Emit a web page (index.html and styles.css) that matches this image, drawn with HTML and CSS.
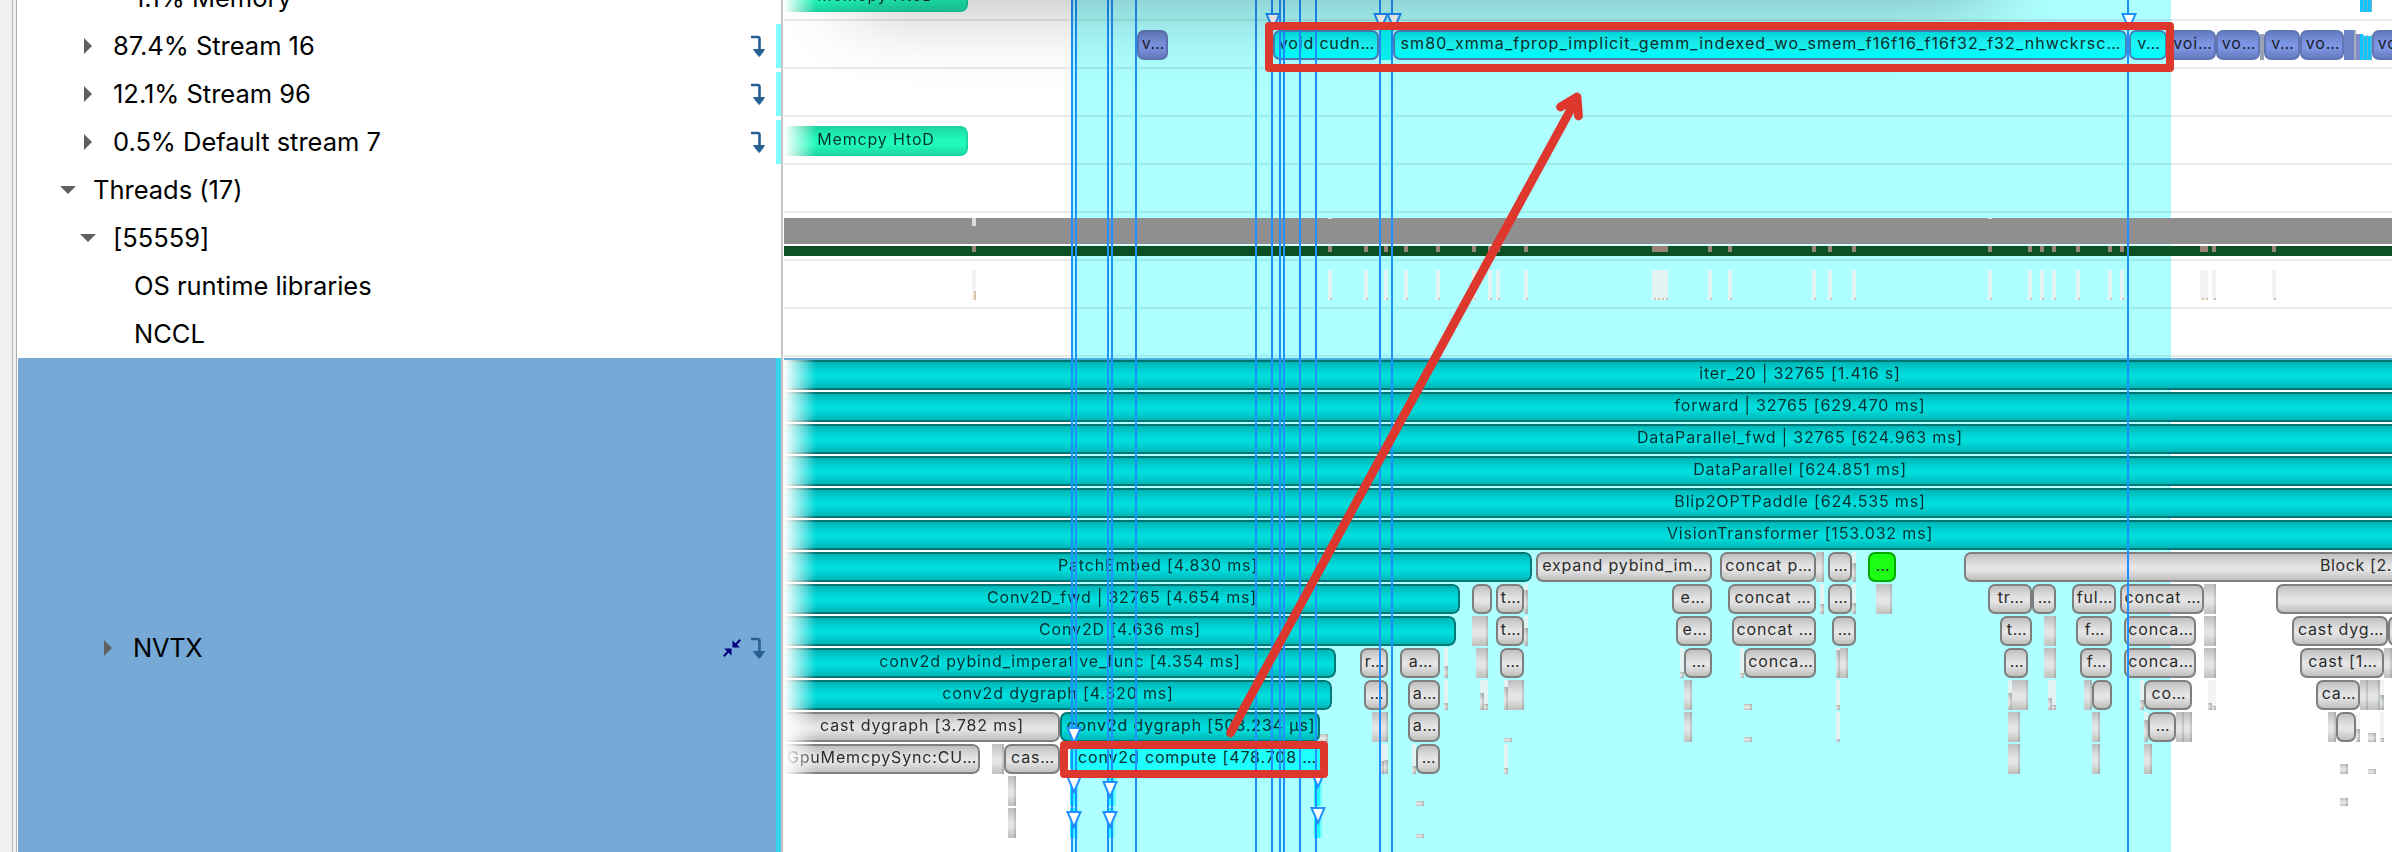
FILE: index.html
```html
<!DOCTYPE html>
<html lang="en">
<head>
<meta charset="utf-8">
<title>Timeline</title>
<link rel="stylesheet" href="styles.css">
</head>
<body>
<div class="app">
  <div class="gutter"></div>
  <aside class="tree">
    <div class="node depth-3"><span class="label">1.1% Memory</span></div>
    <div class="node depth-2 linked"><svg class="caret" viewBox="0 0 16 16"><path d="M4 0L12 8L4 16Z"/></svg><span class="label">87.4% Stream 16</span><svg class="jump" viewBox="0 0 14 24"><path class="hook" d="M0 3H6.5Q8.500 3 8.500 5V16"/><path class="head" d="M2.500 15.500H13.500L10 20.500L8.200 22.500L6.400 20.500Z"/></svg></div>
    <div class="node depth-2 linked"><svg class="caret" viewBox="0 0 16 16"><path d="M4 0L12 8L4 16Z"/></svg><span class="label">12.1% Stream 96</span><svg class="jump" viewBox="0 0 14 24"><path class="hook" d="M0 3H6.5Q8.500 3 8.500 5V16"/><path class="head" d="M2.500 15.500H13.500L10 20.500L8.200 22.500L6.400 20.500Z"/></svg></div>
    <div class="node depth-2 linked"><svg class="caret" viewBox="0 0 16 16"><path d="M4 0L12 8L4 16Z"/></svg><span class="label">0.5% Default stream 7</span><svg class="jump" viewBox="0 0 14 24"><path class="hook" d="M0 3H6.5Q8.500 3 8.500 5V16"/><path class="head" d="M2.500 15.500H13.500L10 20.500L8.200 22.500L6.400 20.500Z"/></svg></div>
    <div class="node depth-1"><svg class="caret" viewBox="0 0 16 16"><path d="M0 4H16L8 12Z"/></svg><span class="label">Threads (17)</span></div>
    <div class="node depth-2"><svg class="caret" viewBox="0 0 16 16"><path d="M0 4H16L8 12Z"/></svg><span class="label">[55559]</span></div>
    <div class="node depth-3"><span class="label">OS runtime libraries</span></div>
    <div class="node depth-3"><span class="label">NCCL</span></div>
    <div class="node depth-3 selected"><svg class="caret" viewBox="0 0 16 16"><path d="M4 0L12 8L4 16Z"/></svg><span class="label">NVTX</span><svg class="collapse" viewBox="0 0 18 18"><path d="M9.500 1.500V8.500H17L14 5.800L18 1.500L16.500 0L12.500 4.200Z"/><path d="M8.500 16.500V9.500H1L4 12.200L0 16.500L1.500 18L5.500 13.800Z"/></svg><svg class="jump" viewBox="0 0 14 24"><path class="hook" d="M0 3H6.5Q8.500 3 8.500 5V16"/><path class="head" d="M2.500 15.500H13.500L10 20.500L8.200 22.500L6.400 20.500Z"/></svg></div>
  </aside>
  <main class="timeline">
    <div class="range"></div>
    <div class="tracks" id="tracks"></div>
    <div class="lanes" id="lanes"></div>
    <div class="markers" id="markers"></div>
  </main>
  <div class="popup-shadow"></div>
  <div class="callout callout-kernels"></div>
  <div class="callout callout-compute"></div>
  <svg class="arrow" viewBox="0 0 380 660"><path d="M20.500 643L367 8M350.500 17L367 7L368.500 26"/></svg>
</div>
<script src="timeline.js"></script>
</body>
</html>
```
FILE: styles.css
```css
* { box-sizing: border-box; }
html, body { margin: 0; height: 100%; overflow: hidden; }
body { background: #fff; font-family: Inter, "Liberation Sans", sans-serif; color: #000; }

.app { position: relative; display: flex; width: 2392px; height: 852px; overflow: hidden; }

.gutter {
  flex: none;
  width: 18px;
  background: linear-gradient(90deg, #f1f1f1 0 12px, #b8b8b8 12px 13px, #f0f0f0 13px 16px, #b0b0b0 16px 17px, #fff 17px);
}

.tree { flex: none; width: 766px; margin-top: -26px; display: flex; flex-direction: column; border-right: 1px solid transparent; background: linear-gradient(90deg, transparent 763px, #c6c6c6 763px 765px, transparent 765px); }
.node { flex: none; display: flex; align-items: center; height: 48px; padding-right: 19px; }
.depth-1 { padding-left: 42px; }
.depth-2 { padding-left: 62px; }
.depth-3 { padding-left: 116px; }
.caret { flex: none; width: 16px; height: 16px; margin-right: 17px; fill: #606060; }
.label { font-size: 25.5px; letter-spacing: -0.02px; line-height: 30px; white-space: nowrap; }
.linked { background: linear-gradient(90deg, transparent 758px, #80ffff 758px 763px, transparent 763px) 0 2px / 100% 44px no-repeat; }
.jump { flex: none; width: 14px; height: 24px; margin-left: auto; margin-right: -1px; }
.hook { fill: none; stroke: #265f91; stroke-width: 2.6; }
.head { fill: #265f91; stroke: #265f91; stroke-width: 1; stroke-linejoin: round; }
.selected { height: 580px; padding-left: 82px; background: linear-gradient(90deg, #76a9d5 758px, #38d4ee 758px 763px, transparent 763px); }
.selected .label { letter-spacing: -0.3px; }
.collapse { flex: none; width: 18px; height: 18px; margin-left: auto; fill: #000080; }
.selected .jump { margin-left: 10px; }

.timeline { position: relative; flex: 1; overflow: hidden; }
.range { position: absolute; left: 288px; top: 0; width: 1099px; height: 852px; background: #aeffff; }

.tracks { position: relative; margin-top: -27px; }
.track { position: relative; height: 48px; border-bottom: 2px solid rgba(0, 0, 0, 0.08); }
.lanes { position: relative; margin-top: 1px; border-top: 2px solid rgba(0, 120, 190, 0.58); display: flex; flex-direction: column; gap: 2px; }
.lane { position: relative; flex: none; height: 30px; }

/* Events sit on the time axis, so each one carries its own start and length. */
.event {
  position: absolute;
  top: 0;
  height: 30px;
  display: flex;
  align-items: center;
  justify-content: center;
  padding-bottom: 4px;
  padding-left: 2px;
  border: 2px solid #7e7e7e;
  border-radius: 7px;
  background: linear-gradient(#bfbfbf, #e4e4e4 45%, #e4e4e4 62%, #bfbfbf);
  color: #2b2b2b;
  font-size: 16px;
  letter-spacing: 0.84px;
  line-height: 20px;
  white-space: nowrap;
  overflow: hidden;
}
.track .event { top: 9px; }
.teal { border-color: #007676; background: linear-gradient(#00b6b6, #00dcdc 45%, #00dcdc 62%, #00b6b6); color: #06302f; }
.cyan { border-color: #4a80b8; background: linear-gradient(#00e6e6, #20f5f5 45%, #00ffff 90%); color: #06302f; }
.wide { letter-spacing: 1.06px; }
.compute { border-color: #00e8e8; background: #20ffff; color: #06302f; }
.green { border-color: #00a800; background: #1aff14; }
.blue { border-color: #6076b4; background: linear-gradient(#657cc0, #7d95e4 45%, #7d95e4 62%, #657cc0); color: #1a1e2c; }
.mint { border-color: #1bd6a2; border-top-width: 0; border-bottom-width: 0; background: linear-gradient(#1cd2a0, #20fabd 45%, #20fabd 62%, #1cd2a0); color: #06362a; }
.open { border-left: 0; border-top-left-radius: 0; border-bottom-left-radius: 0; -webkit-mask-image: linear-gradient(90deg, transparent, #000 32px); mask-image: linear-gradient(90deg, transparent, #000 32px); }
.lead { justify-content: flex-start; padding-left: 354px; letter-spacing: 0.6px; }

.sliver { position: absolute; bottom: 0; background: linear-gradient(90deg, transparent calc(100% - 2px), rgba(0, 40, 40, 0.14) 0), linear-gradient(#bfbfbf, #e4e4e4 45%, #e4e4e4 62%, #bfbfbf); }
.ghost { position: absolute; top: 0; height: 30px; background: rgba(240, 240, 240, 0.8); }
.spark { position: absolute; bottom: 0; background: #20ffff; border-right: 2px solid #70ffff; }
.block { position: absolute; }

.markers { position: absolute; left: 0; top: 0; width: 1608px; height: 852px; }
.wire { position: absolute; top: 0; width: 2px; height: 852px; background: #1e90ff; }
.flag { position: absolute; width: 16px; height: 18px; fill: #fff; stroke: #1e90ff; stroke-width: 2; }

.popup-shadow { position: absolute; left: 850px; top: -196px; width: 1140px; height: 190px; border-radius: 20px; box-shadow: 0 10px 80px rgba(0, 0, 0, 0.3); }
.callout { position: absolute; border: 8px solid #de382e; border-radius: 4px; }
.callout-kernels { left: 1265px; top: 22px; width: 909px; height: 50px; }
.callout-compute { left: 1060px; top: 741px; width: 268px; height: 37px; }
.arrow { position: absolute; left: 1210px; top: 90px; width: 380px; height: 660px; fill: none; stroke: #de382e; stroke-width: 8.8; stroke-linecap: round; stroke-linejoin: round; }
```
FILE: timeline.js
```js
const ORIGIN = 784;

function add(parent, cls, x0, x1, text) {
  const el = document.createElement('div');
  el.className = cls;
  el.style.left = (x0 - ORIGIN) + 'px';
  el.style.width = (x1 - x0) + 'px';
  if (text) el.textContent = text;
  parent.appendChild(el);
  return el;
}

function row(parent, cls) {
  const el = document.createElement('div');
  el.className = cls;
  parent.appendChild(el);
  return el;
}

function block(parent, x, w, top, h, color) {
  const el = add(parent, 'block', x, x + w);
  el.style.top = top + 'px';
  el.style.height = h + 'px';
  el.style.background = color;
}

/* Upper tracks */
const tracksEl = document.getElementById('tracks');
const tracks = Array.from({ length: 8 }, () => row(tracksEl, 'track'));

add(tracks[0], 'event mint open', 784, 968, 'Memcpy HtoD');
for (const x of [2360, 2364, 2368]) {
  block(tracks[0], x, 3, 9, 30, '#10c4ff');
  block(tracks[0], x + 3, 1, 9, 30, '#6cb2cc');
}

block(tracks[1], 1379, 12, 9, 30, '#06f2f2');
add(tracks[1], 'event blue', 1137, 1168, 'v…');
add(tracks[1], 'event cyan', 1273, 1379, 'void cudn…');
add(tracks[1], 'event cyan wide', 1393, 2127, 'sm80_xmma_fprop_implicit_gemm_indexed_wo_smem_f16f16_f16f32_f32_nhwckrsc…');
add(tracks[1], 'event cyan', 2129, 2167, 'v…');
add(tracks[1], 'event blue', 2168, 2216, 'voi…');
add(tracks[1], 'event blue', 2216, 2260, 'vo…');
block(tracks[1], 2260, 4, 13, 26, '#9aa2b4');
add(tracks[1], 'event blue', 2264, 2300, 'v…');
add(tracks[1], 'event blue', 2300, 2344, 'vo…');
block(tracks[1], 2344, 10, 9, 30, '#6c83c8');
block(tracks[1], 2354, 2, 9, 30, '#a8acb8');
block(tracks[1], 2356, 4, 13, 26, '#7c8ccc');
for (const x of [2360, 2364, 2368]) {
  block(tracks[1], x, 3, x === 2360 ? 13 : 15, x === 2360 ? 26 : 24, '#10c4ff');
  block(tracks[1], x + 3, 1, 14, 25, '#6cb2cc');
}
add(tracks[1], 'event blue', 2372, 2416, 'vo…');

add(tracks[3], 'event mint open', 784, 968, 'Memcpy HtoD');

block(tracks[5], 784, 1608, 5, 26, '#8f8f8f');
block(tracks[5], 784, 1608, 31, 2, 'rgba(255,255,255,.5)');
block(tracks[5], 784, 1608, 33, 10, '#0c5124');
block(tracks[5], 972, 4, 5, 8, '#dcdcdc');
block(tracks[5], 1328, 4, 5, 1, '#dcdcdc');
block(tracks[5], 1988, 4, 5, 1, '#dcdcdc');

const calls = [972, 1328, 1364, 1384, 1404, 1436, 1472, 1488, 1496, 1524, [1652, 16], 1708, 1728, 1812,
  1828, 1852, 1988, 2028, 2040, 2052, 2076, 2108, 2120, [2200, 8], 2212, 2272];
for (const c of calls) {
  const [x, w] = Array.isArray(c) ? c : [c, 4];
  const h = x === 972 ? 9 : 2;
  block(tracks[5], x, w, 33, 6, '#9a8275');
  block(tracks[6], x, w, 9, 30, 'rgba(240,240,240,.8)');
  for (let i = 0; i < w; i += 4) {
    block(tracks[6], x + i, 2, 39 - h, h, '#fbf0e2');
    block(tracks[6], x + i + 2, 2, 39 - h, h, '#cfc4b4');
  }
}

/* NVTX lanes: e = event, s = sliver [x0, x1, height], g = sliver under a faint column */
const END = 2816;
const lanes = [
  { e: [[784, END, 'iter_20 | 32765 [1.416 s]', 'teal open']] },
  { e: [[784, END, 'forward | 32765 [629.470 ms]', 'teal open']] },
  { e: [[784, END, 'DataParallel_fwd | 32765 [624.963 ms]', 'teal open']] },
  { e: [[784, END, 'DataParallel [624.851 ms]', 'teal open']] },
  { e: [[784, END, 'Blip2OPTPaddle [624.535 ms]', 'teal open']] },
  { e: [[784, END, 'VisionTransformer [153.032 ms]', 'teal open']] },
  { e: [[784, 1532, 'PatchEmbed [4.830 ms]', 'teal open'], [1536, 1712, 'expand pybind_im…'], [1720, 1816, 'concat p…'],
      [1828, 1852, '…'], [1868, 1896, '…', 'green'], [1964, 2480, 'Block [2.', 'lead']],
    s: [[1816, 1824]], g: [[1852, 1856, 19]] },
  { e: [[784, 1460, 'Conv2D_fwd | 32765 [4.654 ms]', 'teal open'], [1472, 1492], [1496, 1524, 't…'], [1672, 1712, 'e…'],
      [1728, 1816, 'concat …'], [1828, 1852, '…'], [1988, 2032, 'tr…'], [2032, 2056, '…'], [2072, 2116, 'ful…'],
      [2120, 2204, 'concat …'], [2276, 2480]],
    s: [[1876, 1892], [2204, 2216]], g: [[1524, 1528, 24], [1820, 1824, 10], [1852, 1856, 11]] },
  { e: [[784, 1456, 'Conv2D [4.636 ms]', 'teal open'], [1496, 1524, 't…'], [1676, 1712, 'e…'], [1732, 1816, 'concat …'],
      [1832, 1856, '…'], [2000, 2032, 't…'], [2076, 2112, 'f…'], [2124, 2196, 'conca…'], [2292, 2388, 'cast dyg…'], [2388, 2440]],
    s: [[1472, 1488], [2044, 2056], [2204, 2216]], g: [[1524, 1528, 18]] },
  { e: [[784, 1336, 'conv2d pybind_imperative_func [4.354 ms]', 'teal open'], [1360, 1388, 'r…'], [1400, 1440, 'a…'],
      [1500, 1524, '…'], [1684, 1712, '…'], [1744, 1816, 'conca…'], [2004, 2028, '…'], [2080, 2112, 'f…'],
      [2124, 2196, 'conca…'], [2300, 2384, 'cast [1…']],
    s: [[1476, 1488], [1840, 1848], [2044, 2056], [2204, 2216], [2384, 2392]],
    g: [[1444, 1448, 12], [1680, 1684, 6], [1740, 1744, 5], [1836, 1840, 28]] },
  { e: [[784, 1332, 'conv2d dygraph [4.320 ms]', 'teal open'], [1364, 1388, '…'], [1408, 1440, 'a…'], [2092, 2112],
      [2144, 2192, 'co…'], [2316, 2360, 'ca…']],
    s: [[1508, 1524], [1684, 1692], [1744, 1752, 6], [2012, 2028], [2084, 2092], [2360, 2368], [2368, 2380]],
    g: [[1444, 1448, 7], [1480, 1484, 17], [1484, 1488, 6], [1504, 1508, 23], [1836, 1840, 5], [2008, 2012, 17],
      [2048, 2052, 12], [2052, 2056, 5], [2140, 2144, 10], [2208, 2212, 7], [2212, 2216, 4], [2380, 2384, 15]] },
  { e: [[784, 1060, 'cast dygraph [3.782 ms]', 'open'], [1060, 1320, 'conv2d dygraph [503.234 µs]', 'teal'],
      [1408, 1440, 'a…'], [2148, 2176, '…'], [2336, 2356]],
    s: [[1320, 1328, 8], [1372, 1388], [1504, 1512, 4], [1684, 1692], [1744, 1752, 5], [2008, 2020], [2092, 2100],
      [2176, 2184], [2184, 2192], [2328, 2336], [2368, 2376, 9]],
    g: [[1836, 1840, 3], [2144, 2148, 22], [2356, 2360, 13], [2380, 2384, 4]] },
  { e: [[784, 980, 'GpuMemcpySync:CU…', 'open'], [1004, 1060, 'cas…'], [1070, 1323, 'conv2d compute [478.708 …', 'compute'],
      [1416, 1440, '…']],
    s: [[992, 1004], [2008, 2020], [2092, 2100], [2144, 2152], [2340, 2348, 10], [2368, 2376, 5]],
    g: [[1380, 1384, 13], [1384, 1388, 14], [1412, 1416, 8], [1504, 1508, 6]] },
  { s: [[1008, 1016], [1416, 1424, 5], [2340, 2348, 8]], k: [[1070, 1078, 30], [1108, 1116, 30], [1314, 1322, 30]] },
  { s: [[1008, 1016], [1416, 1424, 4]], k: [[1070, 1078, 30], [1107, 1115, 30], [1314, 1322, 30]] },
];

const lanesEl = document.getElementById('lanes');
for (const data of lanes) {
  const lane = row(lanesEl, 'lane');
  for (const [x0, x1, h] of data.g || []) {
    add(lane, 'ghost', x0, x1);
    add(lane, 'sliver', x0, x1).style.height = h + 'px';
  }
  for (const [x0, x1, h = 30] of data.s || []) add(lane, 'sliver', x0, x1).style.height = h + 'px';
  for (const [x0, x1, h] of data.k || []) add(lane, 'spark', x0, x1).style.height = h + 'px';
  for (const [x0, x1, text, kind = ''] of data.e || []) add(lane, 'event ' + kind, x0, x1, text);
}

/* Correlation wires and their flags */
const markers = document.getElementById('markers');
for (const x of [1071, 1075, 1107, 1111, 1135, 1255, 1271, 1279, 1283, 1299, 1315, 1379, 1391, 2127]) {
  add(markers, 'wire', x, x + 2);
}
const flags = [[1272.5, 13], [1381, 13], [1393.5, 13], [2129, 13], [1073.5, 727], [1073.5, 776], [1073.5, 811],
  [1109.5, 781], [1109.5, 811], [1317.5, 771], [1317.5, 807]];
markers.insertAdjacentHTML('beforeend', flags.map(([x, y]) =>
  `<svg class="flag" style="left:${x - ORIGIN - 8}px;top:${y}px" viewBox="0 0 16 18"><path d="M1.500 1H14.500L8 16Z"/></svg>`).join(''));
```
